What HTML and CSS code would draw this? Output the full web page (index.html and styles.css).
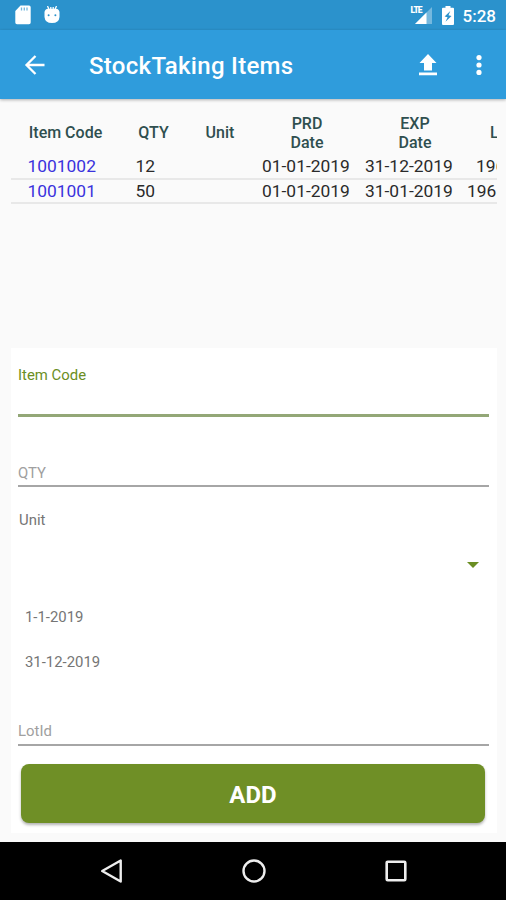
FILE: index.html
```html
<!DOCTYPE html>
<html>
<head>
<meta charset="utf-8">
<meta name="viewport" content="width=device-width, initial-scale=1.0">
<title>StockTaking Items</title>
<link rel="stylesheet" href="styles.css">
</head>
<body>

<div class="status">
  <svg class="sd" width="16" height="20" viewBox="0 0 16 20"><path fill="#fff" d="M5.500 .5H14a1.700 1.700 0 0 1 1.700 1.700V17.500a1.700 1.700 0 0 1-1.700 1.700H2A1.700 1.700 0 0 1 .3 17.500V6z"/><path stroke="#2b92cc" stroke-width="1.300" opacity=".65" d="M6.500 2.500v3M9.300 2.500v3M12 2.500v3"/></svg>
  <svg class="droid" width="16" height="18" viewBox="0 0 16 18"><path stroke="#fff" stroke-width="1.300" fill="none" d="M3.500 0l1.500 3.500M12.500 0L11 3.500M6.800 1v3M9.200 1v3"/><path fill="#fff" d="M.5 6Q1 3 4 2.800h8q3 .2 3.500 3.200v5q-.5 6-7.500 6T.5 11z"/><circle cx="4.600" cy="9.200" r="1" fill="#2b92cc"/><circle cx="11.400" cy="9.200" r="1" fill="#2b92cc"/></svg>
  <div class="signal">
    <svg width="17" height="18" viewBox="0 0 17 18"><path fill="#fff" opacity=".35" d="M17 1v17H0z"/><path fill="#fff" d="M11.500 6.500V18H0z"/></svg>
    <span class="lte">LTE</span>
  </div>
  <svg class="battery" width="12" height="19" viewBox="0 0 12 19"><path fill="#fff" d="M3.500 0h5v1.800H11q1 0 1 1V18q0 1-1 1H1q-1 0-1-1V2.800q0-1 1-1h2.500z"/><path fill="#2b92cc" d="M8.300 5L2.600 10.500l3 .8L3.500 15.800 9.500 10l-3-.8z"/></svg>
  <span class="time">5:28</span>
</div>

<div class="appbar">
  <svg class="back" width="22" height="20" viewBox="0 0 22 20"><path fill="none" stroke="#fff" stroke-width="2.300" d="M20.500 10H2.500M11.500 1L2.500 10l9 9"/></svg>
  <h1>StockTaking Items</h1>
  <svg class="upload" width="18" height="22" viewBox="0 0 18 22"><path fill="#fff" d="M9 0l8.500 9H13v7.500H5V9H.5zM0 18.500h18v2.800H0z"/></svg>
  <svg class="more" width="6" height="20" viewBox="0 0 6 20"><g fill="#fff"><circle cx="3" cy="2.600" r="2.600"/><circle cx="3" cy="10" r="2.600"/><circle cx="3" cy="17.400" r="2.600"/></g></svg>
</div>

<div class="list">
  <div class="row head">
    <span>Item Code</span><span>QTY</span><span>Unit</span><span>PRD<br>Date</span><span>EXP<br>Date</span><span class="lot">L</span>
  </div>
  <div class="row item">
    <a class="code">1001002</a><span class="qty">12</span><span></span><span class="prd">01-01-2019</span><span class="exp">31-12-2019</span><span class="lot short">196</span>
  </div>
  <div class="row item">
    <a class="code">1001001</a><span class="qty">50</span><span></span><span class="prd">01-01-2019</span><span class="exp">31-01-2019</span><span class="lot">196</span>
  </div>
</div>

<div class="form">
  <div class="field active">Item Code</div>
  <div class="field quantity">QTY</div>
  <div class="unit">Unit</div>
  <div class="spinner"><svg width="12" height="6" viewBox="0 0 12 6"><path fill="#6b8e23" d="M0 0h12L6 6z"/></svg></div>
  <div class="date">1-1-2019</div>
  <div class="date">31-12-2019</div>
  <div class="field lotid">LotId</div>
  <button class="add">ADD</button>
</div>

<div class="navbar">
  <svg width="24" height="26" viewBox="0 0 24 26"><path fill="none" stroke="#eee" stroke-width="2.400" stroke-linejoin="round" d="M20.700 2.500v21L2.200 13z"/></svg>
  <svg width="24" height="26" viewBox="0 0 24 26"><circle cx="12" cy="13" r="10.500" fill="none" stroke="#eee" stroke-width="2.400"/></svg>
  <svg width="24" height="26" viewBox="0 0 24 26"><rect x="2.700" y="3.700" width="18.600" height="18.600" rx="1" fill="none" stroke="#eee" stroke-width="2.600"/></svg>
</div>

</body>
</html>
```
FILE: styles.css
```css
* {box-sizing: border-box;}
body {margin:0; width:506px; height:900px; overflow:hidden; display:flex; flex-direction:column; background:#fafafa; font-family:Roboto, "Liberation Sans", sans-serif;}
svg {display:block; flex:none;}

.status {height:30px; flex:none; display:flex; align-items:flex-start; padding:0 10px 0 15px; background:#2b92cc; color:white;}
.sd {margin-top:5px;}
.droid {margin:6px 0 0 13px;}
.signal {position:relative; margin:6px 0 0 auto; width:21px; padding-left:4px;}
.lte {position:absolute; left:0; top:0; font-size:8.500px; line-height:9px; font-weight:900; letter-spacing:-0.9px;}
.battery {margin:6px 0 0 10px;}
.time {margin-left:9px; font-size:17px; line-height:32px; font-weight:500;}

.appbar {height:69px; flex:none; display:flex; align-items:center; padding:0 24px 0 24px; background:#2f9cdc; color:white; box-shadow:0 1px 3px rgba(0,0,0,0.3);}
.appbar h1 {margin:2px auto 0 43px; font-size:24px; font-weight:500; letter-spacing:0.3px; white-space:nowrap;}
.more {margin-left:39px;}

.list {height:250px; flex:none; margin:11px 9px 0 11px; overflow:hidden;}
.row {display:grid; grid-template-columns:109px 67px 66px 108px 108px 60px; width:518px; align-items:center; white-space:nowrap;}
.head {height:45px; font-size:16px; line-height:19px; font-weight:500; text-align:center; color:#2f4f4f;}
.head .lot {text-align:left; padding-left:21px;}
.item {height:24.500px; padding-top:1px; border-bottom:2px solid #e8e8e8; font-size:17.400px; line-height:21px; color:#2a2a2a;}
.code {padding-left:16.500px; color:#3a32dd;}
.qty {padding-left:15.500px;}
.prd {padding-left:9px;}
.exp {padding-left:4px;}
.item .lot {margin-left:-2px;}
.item .short {margin-left:7px;}

.form {height:485px; flex:none; margin:-12px 9px 0 11px; padding:18px 8px 0 7px; background:white; font-size:14.900px; line-height:18px; color:#757575;}
.field {border-bottom:2px solid #a6a6a6; color:#a0a0a0;}
.active {height:51px; border-bottom:3px solid #93a777; color:#6b8e23;}
.quantity {height:70px; padding-top:47px;}
.unit {padding:24px 0 0 1px;}
.spinner {display:flex; justify-content:flex-end; padding:33px 10px 0 0;}
.date {padding:0 0 0 7px; margin-top:27px;}
.spinner + .date {margin-top:40px;}
.lotid {height:75px; padding-top:51px;}
.add {display:block; width:464px; height:59px; margin:18px 0 0 3px; padding:2px 0 0; border:0; border-radius:8px; background:#6f8f26; color:white; font:700 24px Roboto, "Liberation Sans", sans-serif; box-shadow:0 2px 3px rgba(0,0,0,0.3);}

.navbar {flex:none; height:58px; margin-top:auto; display:flex; justify-content:space-between; align-items:center; padding:0 98px 0 100px; background:black;}
```
